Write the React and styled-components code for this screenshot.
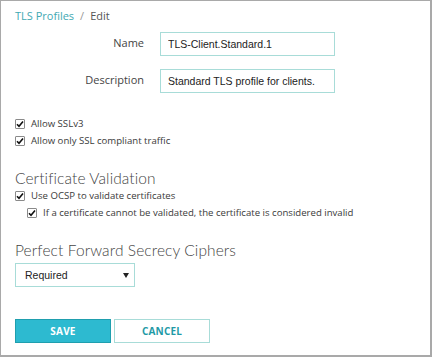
import React, { useState } from 'react';
import styled, { createGlobalStyle } from 'styled-components';

const GlobalStyle = createGlobalStyle`
  html, body {
    margin: 0;
    padding: 0;
    background: #ffffff;
  }
  * {
    box-sizing: border-box;
  }
`;

const Frame = styled.div`
  width: 432px;
  height: 357px;
  border: 1px solid #a9a9a9;
  border-bottom-width: 2px;
  border-right-width: 2px;
  padding: 7px 14px 0 14px;
  font-family: 'Open Sans', 'Liberation Sans', sans-serif;
  color: #333;
  overflow: hidden;
`;

const Breadcrumb = styled.div`
  font-size: 11px;
  line-height: 15px;
  color: #555;
  display: flex;
  gap: 6px;
`;

const Crumb = styled.a`
  color: #3fa9b3;
  text-decoration: none;
`;

const Slash = styled.span`
  color: #999;
`;

const FormGrid = styled.div`
  display: grid;
  grid-template-columns: 129px 175px;
  column-gap: 16px;
  row-gap: 13px;
  align-items: center;
  margin-top: 9px;
`;

const Label = styled.label`
  text-align: right;
  font-size: 11px;
  color: #444;
  padding-bottom: 3px;
`;

const TextInput = styled.input`
  height: 24px;
  width: 100%;
  border: 1px solid #a8dcd8;
  padding: 0 7px;
  font-family: 'Liberation Sans', Arial, sans-serif;
  font-size: 10.5px;
  color: #222;
  outline: none;
`;

const CheckList = styled.div`
  display: flex;
  flex-direction: column;
  gap: 3px;
  margin-top: ${(p) => p.$top || 0}px;
`;

const CheckRow = styled.label`
  display: flex;
  align-items: center;
  gap: 6px;
  font-size: 9.6px;
  line-height: 14px;
  color: #3a3a3a;
  padding-left: ${(p) => (p.$indent ? 12 : 0)}px;
  cursor: pointer;
`;

const Box = styled.span`
  width: 10px;
  height: 10px;
  border: 1px solid #8a8a8a;
  border-radius: 1px;
  background: #fff;
  display: inline-flex;
  align-items: center;
  justify-content: center;
  flex: none;
`;

const Heading = styled.h3`
  margin: ${(p) => p.$top}px 0 ${(p) => p.$bottom}px 0;
  font-family: Lato, 'Open Sans', sans-serif;
  font-weight: 300;
  font-size: 15.5px;
  line-height: 20px;
  color: #444;
  letter-spacing: 0.1px;
`;

const SelectBox = styled.div`
  width: 120px;
  height: 24px;
  border: 1px solid #a8dcd8;
  display: flex;
  align-items: center;
  justify-content: space-between;
  padding: 0 5px 0 9px;
  font-family: 'Liberation Sans', Arial, sans-serif;
  font-size: 10.5px;
  color: #222;
`;

const Caret = styled.span`
  width: 0;
  height: 0;
  border-left: 3px solid transparent;
  border-right: 3px solid transparent;
  border-top: 5px solid #222;
`;

const Actions = styled.div`
  display: flex;
  gap: 3px;
  margin-top: 32px;
`;

const Button = styled.button`
  width: 96px;
  height: 24px;
  font-family: 'Open Sans', 'Liberation Sans', sans-serif;
  font-weight: 700;
  font-size: 10px;
  letter-spacing: 0.2px;
  cursor: pointer;
  border: 1px solid ${(p) => (p.$primary ? '#1f9fae' : '#a8dcd8')};
  background: ${(p) => (p.$primary ? '#2dbad0' : '#fff')};
  color: ${(p) => (p.$primary ? '#fff' : '#1f9aa6')};
`;

function Check({ checked, indent, children, onToggle }) {
  return (
    <CheckRow $indent={indent} onClick={onToggle}>
      <Box>
        {checked && (
          <svg width="8" height="8" viewBox="0 0 8 8">
            <path d="M1 4.2 L3 6.3 L7 1.4" fill="none" stroke="#111" strokeWidth="1.6" />
          </svg>
        )}
      </Box>
      {children}
    </CheckRow>
  );
}

function App() {
  const [checks, setChecks] = useState({ ssl: true, only: true, ocsp: true, invalid: true });
  const toggle = (k) => () => setChecks({ ...checks, [k]: !checks[k] });

  return (
    <Frame>
      <GlobalStyle />
      <Breadcrumb>
        <Crumb href="#">TLS Profiles</Crumb>
        <Slash>/</Slash>
        <span>Edit</span>
      </Breadcrumb>

      <FormGrid>
        <Label>Name</Label>
        <TextInput defaultValue="TLS-Client.Standard.1" />
        <Label>Description</Label>
        <TextInput defaultValue="Standard TLS profile for clients." />
      </FormGrid>

      <CheckList $top={24}>
        <Check checked={checks.ssl} onToggle={toggle('ssl')}>Allow SSLv3</Check>
        <Check checked={checks.only} onToggle={toggle('only')}>Allow only SSL compliant traffic</Check>
      </CheckList>

      <Heading $top={20} $bottom={1}>Certificate Validation</Heading>
      <CheckList>
        <Check checked={checks.ocsp} onToggle={toggle('ocsp')}>Use OCSP to validate certificates</Check>
        <Check indent checked={checks.invalid} onToggle={toggle('invalid')}>
          If a certificate cannot be validated, the certificate is considered invalid
        </Check>
      </CheckList>

      <Heading $top={20} $bottom={3}>Perfect Forward Secrecy Ciphers</Heading>
      <SelectBox>
        Required
        <Caret />
      </SelectBox>

      <Actions>
        <Button $primary>SAVE</Button>
        <Button>CANCEL</Button>
      </Actions>
    </Frame>
  );
}

export default App;
